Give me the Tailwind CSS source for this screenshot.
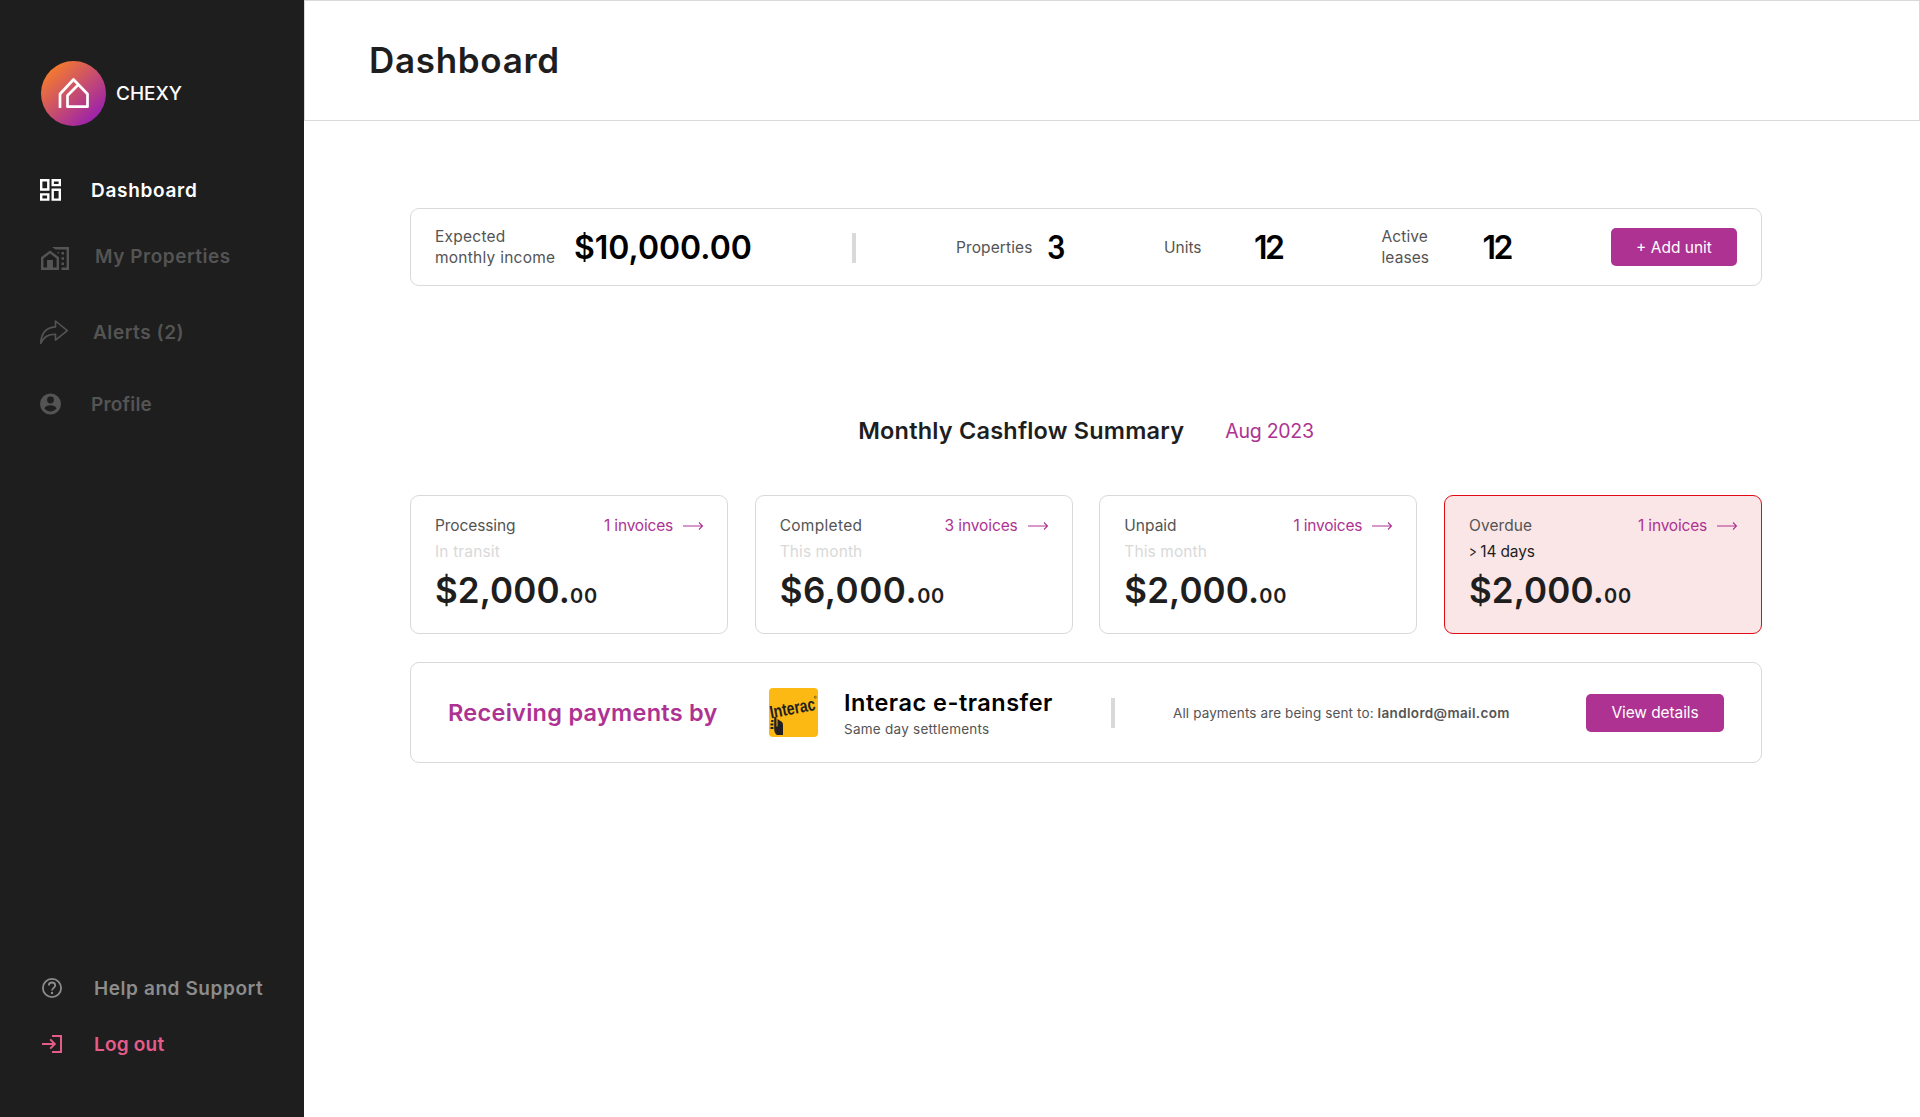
<!DOCTYPE html>
<html lang="en">
<head>
<meta charset="utf-8">
<title>Chexy Dashboard</title>
<script src="https://cdn.jsdelivr.net/npm/@tailwindcss/browser@4"></script>
</head>
<body class="flex h-[1117px] w-[1920px] overflow-hidden bg-white font-['Inter',sans-serif] text-[#1e1e1e] antialiased">
<aside class="flex w-[304px] shrink-0 flex-col bg-[#1e1e1e] pt-[61px] pb-[57px] text-[19px] font-semibold whitespace-nowrap">
  <div class="flex items-center gap-[10px] pl-[41px] text-white">
    <svg class="size-[65px]" viewBox="0 0 65 65" fill="none">
      <defs><linearGradient id="g" x1="8" y1="8" x2="54" y2="57" gradientUnits="userSpaceOnUse"><stop stop-color="#f67c2c"/><stop offset="1" stop-color="#9c22ab"/></linearGradient></defs>
      <circle cx="32.5" cy="32.5" r="32.5" fill="url(#g)"/>
      <path d="M19 47V33L32.5 18.5L46.5 33V45.7H26.5V34.5L37 24" stroke="#fff" stroke-width="2.7" stroke-linejoin="round"/>
    </svg>
    <span class="pt-[2px] text-[19px] font-medium tracking-[0px]">CHEXY</span>
  </div>
  <nav class="flex flex-col text-[#545454]">
    <a class="mt-12 flex h-8 items-center pl-[40px] text-white">
      <svg class="h-[22px] w-[51px]" viewBox="0 0 51 22" fill="none" stroke="#fff" stroke-width="2.4"><path d="M1.2 1.2H8.3V10.5H1.2zM12.7 1.2H19.8V6.1H12.7zM12.7 10.7H19.8V20.6H12.7zM1.2 15.4H8.3V20.6H1.2z"/></svg>
      <span class="pt-[2px] tracking-[0.7px]">Dashboard</span>
    </a>
    <a class="mt-[34px] flex h-8 items-center pl-[41px]">
      <svg class="mt-[4px] h-[23px] w-[54px]" viewBox="0 0 54 23" fill="currentColor"><path d="M11 0H28V23H20.5V20.6H25.6V2.4H14.5L11 0Z"/><path d="M9 3.6L18 10.2V23H0V10.2zM9 6.6L2.4 11.4V20.6H6.2V13H11.8V20.6H15.6V11.4z" fill-rule="evenodd"/><path d="M6.2 13H11.8V22H6.2zM20.5 5H23V7.5H20.5zM20.5 10.3H23V12.8H20.5zM20.5 15.5H23V18H20.5zM16.6 5H18V6.5H16.6z"/></svg>
      <span class="pt-[2px] tracking-[0.53px]">My Properties</span>
    </a>
    <a class="mt-[44px] flex h-8 items-center pl-[40px]">
      <svg class="h-[25px] w-[53px]" viewBox="0 0 53 25" fill="none" stroke="currentColor" stroke-width="1.6" stroke-linejoin="round"><path d="M15.5 1V6.9C6 7.6 1 13 .8 23.5C4 16.5 8 14.2 15.5 14.2V20.2L27.3 10.6z"/></svg>
      <span class="pt-[2px] tracking-[0.55px]">Alerts (2)</span>
    </a>
    <a class="mt-[40px] flex h-8 items-center pl-[40px]">
      <svg class="h-[22px] w-[51px]" viewBox="0 0 51 22" fill="currentColor"><path fill-rule="evenodd" d="M10.5 0.5a10.5 10.5 0 1 0 0 21a10.5 10.5 0 1 0 0-21zM10.5 3.6a3.4 3.4 0 1 1 0 6.8a3.4 3.4 0 1 1 0-6.8zM4.3 15.2C5.8 12.9 8.5 12.3 10.5 12.3S15.2 12.9 16.7 15.2C15.3 17.2 13 18.4 10.5 18.4S5.7 17.2 4.3 15.2z"/></svg>
      <span class="pt-[2px] tracking-[0.2px]">Profile</span>
    </a>
  </nav>
  <div class="mt-auto flex flex-col gap-6">
    <a class="flex h-8 items-center pl-[42px] text-[#8c8c8c]">
      <svg class="h-5 w-[52px]" viewBox="0 0 52 20" fill="none" stroke="currentColor" stroke-width="1.8"><circle cx="10" cy="10" r="9.1"/><path d="M6.8 7.6C6.8 5.6 8.2 4.5 10 4.5S13.2 5.7 13.2 7.5C13.2 9.8 10 10 10 12.6"/><circle cx="10" cy="15" r="1.2" fill="currentColor" stroke="none"/></svg>
      <span class="pt-[2px] tracking-[0.58px]">Help and Support</span>
    </a>
    <a class="flex h-8 items-center pl-[42px] text-[#e65c89]">
      <svg class="h-[18px] w-[52px]" viewBox="0 0 52 18" fill="none" stroke="currentColor" stroke-width="2"><path d="M10 1H19V17H10M0 9H12.5M8.2 4.4L12.8 9L8.2 13.6"/></svg>
      <span class="pt-[2px] tracking-[0.2px]">Log out</span>
    </a>
  </div>
</aside>
<main class="flex flex-1 flex-col whitespace-nowrap">
  <header class="flex h-[121px] items-center border border-[#d9d9d9] pl-16">
    <h1 class="text-[35px] font-semibold tracking-[0.7px]">Dashboard</h1>
  </header>
  <div class="ml-[106px] flex w-[1352px] flex-col">
    <section class="mt-[87px] grid h-[78px] grid-cols-[139px_278px_104px_91px_117px_90px_127.5px_101px_128.5px_126px] items-center rounded-[9px] border border-[#d9d9d9] pl-[24px] text-[15.5px] leading-[21px] text-[#545454]">
      <div class="tracking-[0.25px]">Expected<br>monthly income</div>
      <div class="text-[32px] font-semibold tracking-[0px] text-black">$10,000.00</div>
      <div class="mt-[2px] h-[30px] w-[3.5px] bg-[#d9d9d9]"></div>
      <div class="tracking-[0.1px]">Properties</div>
      <div class="text-[32px] font-semibold text-black"><span class="inline-block origin-left scale-x-90">3</span></div>
      <div>Units</div>
      <div class="text-[32px] font-semibold tracking-[-2.5px] text-black">12</div>
      <div class="tracking-[0.1px]">Active<br>leases</div>
      <div class="text-[32px] font-semibold tracking-[-2.5px] text-black">12</div>
      <button class="h-[38px] rounded-[5px] bg-[#ae3292] text-white">+ Add unit</button>
    </section>
    <div class="mt-[129px] flex h-8 items-center justify-center gap-[41px]">
      <h2 class="text-[23.5px] font-semibold tracking-[0.2px]">Monthly Cashflow Summary</h2>
      <span class="pt-px text-[19.5px] tracking-[-0.25px] text-[#ae3292]">Aug 2023</span>
    </div>
    <section class="mt-12 grid grid-cols-4 gap-[26.67px] text-[15.5px] leading-[26px]">
      <article class="h-[139px] rounded-[9px] border border-[#d9d9d9] px-6 pt-[17px]">
        <div class="flex items-center justify-between text-[#545454]"><span class="tracking-[-0.1px]">Processing</span><a class="flex items-center gap-[10px] tracking-[-0.2px] text-[#ae3292]">1 invoices<svg class="h-2 w-5" viewBox="0 0 20 8" fill="none" stroke="currentColor" stroke-width="1.1"><path d="M0 4H19.5M16 .5L19.5 4L16 7.5"/></svg></a></div>
        <div class="tracking-[0.15px] text-[#d9d9d9]">In transit</div>
        <div class="mt-[4px] text-[35px] leading-[42px] font-semibold tracking-[0.1px]">$2,000.<span class="text-[20px] tracking-[0.8px]">00</span></div>
      </article>
      <article class="h-[139px] rounded-[9px] border border-[#d9d9d9] px-6 pt-[17px]">
        <div class="flex items-center justify-between text-[#545454]"><span class="tracking-[0.3px]">Completed</span><a class="flex items-center gap-[10px] tracking-[-0.1px] text-[#ae3292]">3 invoices<svg class="h-2 w-5" viewBox="0 0 20 8" fill="none" stroke="currentColor" stroke-width="1.1"><path d="M0 4H19.5M16 .5L19.5 4L16 7.5"/></svg></a></div>
        <div class="tracking-[0.1px] text-[#d9d9d9]">This month</div>
        <div class="mt-[4px] text-[35px] leading-[42px] font-semibold tracking-[0.55px]">$6,000.<span class="text-[20px] tracking-[0.6px]">00</span></div>
      </article>
      <article class="h-[139px] rounded-[9px] border border-[#d9d9d9] px-6 pt-[17px]">
        <div class="flex items-center justify-between text-[#545454]"><span>Unpaid</span><a class="flex items-center gap-[10px] tracking-[-0.2px] text-[#ae3292]">1 invoices<svg class="h-2 w-5" viewBox="0 0 20 8" fill="none" stroke="currentColor" stroke-width="1.1"><path d="M0 4H19.5M16 .5L19.5 4L16 7.5"/></svg></a></div>
        <div class="tracking-[0.1px] text-[#d9d9d9]">This month</div>
        <div class="mt-[4px] text-[35px] leading-[42px] font-semibold tracking-[0.1px]">$2,000.<span class="text-[20px] tracking-[0.8px]">00</span></div>
      </article>
      <article class="h-[139px] rounded-[9px] border border-[#e00b16] bg-[#fae6e6] px-6 pt-[17px]">
        <div class="flex items-center justify-between text-[#545454]"><span class="tracking-[0.1px]">Overdue</span><a class="flex items-center gap-[10px] tracking-[-0.2px] text-[#ae3292]">1 invoices<svg class="h-2 w-5" viewBox="0 0 20 8" fill="none" stroke="currentColor" stroke-width="1.1"><path d="M0 4H19.5M16 .5L19.5 4L16 7.5"/></svg></a></div>
        <div class="tracking-[-0.15px]"><span class="-mr-[3px] inline-block origin-left scale-x-75">&gt;</span> 14 days</div>
        <div class="mt-[4px] text-[35px] leading-[42px] font-semibold tracking-[0.1px]">$2,000.<span class="text-[20px] tracking-[0.8px]">00</span></div>
      </article>
    </section>
    <section class="mt-7 grid h-[101px] grid-cols-[321px_75px_267px_62px_413px_138px] items-center rounded-[9px] border border-[#d9d9d9] pl-[37px] text-[13.5px] text-[#545454]">
      <h3 class="text-[23.5px] font-semibold tracking-[0.28px] text-[#ae3292]">Receiving payments by</h3>
      <svg class="size-[49px] overflow-visible" viewBox="0 0 49 49">
        <rect width="49" height="49" rx="4" fill="#fdb913"/>
        <text x="2" y="30.5" transform="rotate(-11 2 30.5)" font-family="Liberation Sans" font-weight="700" font-size="18" textLength="46" lengthAdjust="spacingAndGlyphs" fill="#231f20">Interac</text>
        <path d="M5.2 29Q6.8 28 7.5 30V38.5H8.5V31L13 34Q14 35 14 37V47H8Q5.2 45 5.2 41z" fill="#231f20"/>
        <path d="M2.2 33H4.5M1.5 36.5H4.5M1.5 40H4.5" stroke="#231f20" stroke-width="2.2"/>
        <circle cx="46.3" cy="9.2" r="1" fill="none" stroke="#231f20" stroke-width=".5"/>
      </svg>
      <div class="pt-[4px]">
        <div class="text-[23.5px] leading-7 font-semibold tracking-[0.5px] text-black">Interac e-transfer</div>
        <div class="pt-[1px] leading-[22px] tracking-[0.25px]">Same day settlements</div>
      </div>
      <div class="h-[30px] w-[3.5px] bg-[#d9d9d9]"></div>
      <p class="pt-px tracking-[0.12px]">All payments are being sent to: <b class="font-semibold tracking-[0.35px]">landlord@mail.com</b></p>
      <button class="h-[38px] rounded-[5px] bg-[#ae3292] text-[15.5px] tracking-[-0.1px] text-white">View details</button>
    </section>
  </div>
</main>
</body>
</html>
